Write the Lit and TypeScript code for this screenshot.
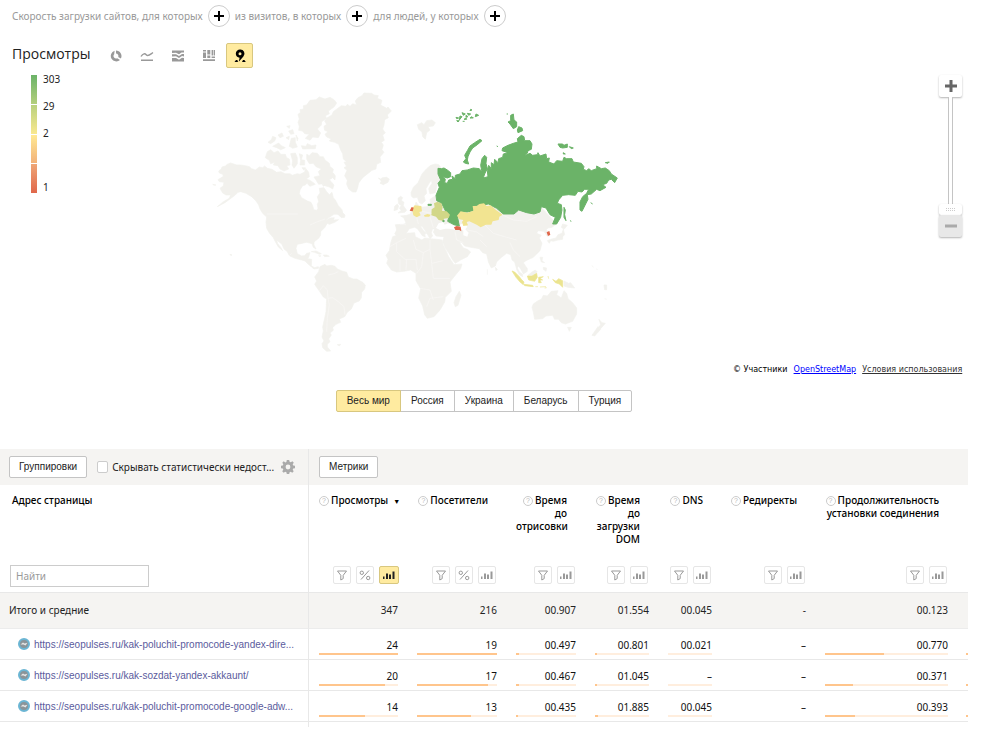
import { LitElement, html, svg, css, nothing } from "lit";
import { customElement } from "lit/decorators.js";
import { classMap } from "lit/directives/class-map.js";
import { styleMap } from "lit/directives/style-map.js";

type Cell = { text: string; bar?: number };
type Column = { title: string[]; percent?: boolean; active?: boolean; sorted?: boolean };

const COLUMNS: Column[] = [
  { title: ["Просмотры"], percent: true, active: true, sorted: true },
  { title: ["Посетители"], percent: true },
  { title: ["Время", "до", "отрисовки"] },
  { title: ["Время", "до", "загрузки", "DOM"] },
  { title: ["DNS"] },
  { title: ["Редиректы"] },
  { title: ["Продолжительность", "установки соединения"] },
];

const TOTALS = ["347", "216", "00.907", "01.554", "00.045", "-", "00.123"];

const ROWS: { url: string; cells: Cell[] }[] = [
  {
    url: "https://seopulses.ru/kak-poluchit-promocode-yandex-dire...",
    cells: [
      { text: "24", bar: 100 }, { text: "19", bar: 100 }, { text: "00.497", bar: 5 }, { text: "00.801", bar: 4 },
      { text: "00.021", bar: 0 }, { text: "–" }, { text: "00.770", bar: 48 },
    ],
  },
  {
    url: "https://seopulses.ru/kak-sozdat-yandex-akkaunt/",
    cells: [
      { text: "20", bar: 83 }, { text: "17", bar: 89 }, { text: "00.467", bar: 5 }, { text: "01.045", bar: 4 },
      { text: "–", bar: 0 }, { text: "–" }, { text: "00.371", bar: 23 },
    ],
  },
  {
    url: "https://seopulses.ru/kak-poluchit-promocode-google-adw...",
    cells: [
      { text: "14", bar: 58 }, { text: "13", bar: 68 }, { text: "00.435", bar: 4 }, { text: "01.885", bar: 5 },
      { text: "00.045", bar: 0 }, { text: "–" }, { text: "00.393", bar: 24 },
    ],
  },
];

const chartIcons = [
  { label: "Круговая диаграмма", art: svg`<path d="M7 1.500A5.500 5.500 0 0 1 11.900 9.500L9.200 8A2.400 2.400 0 0 0 7 4.600z"/><path d="M5.600 1.700L5.200 5.200A2.600 2.600 0 0 0 8.200 9.300L11 11A5.500 5.500 0 1 1 5.600 1.700z"/>` },
  { label: "Линии", art: svg`<path d="M1 7.500C3 4 5 4.400 6.500 6S9.500 6 13 3.500" fill="none" stroke="currentColor" stroke-width="1.400"/><path d="M1 10.500h12v1.500H1z"/>` },
  { label: "Области", art: svg`<path d="M1 1.500h12v2L10.500 3.500L8 5.200L5 3.700L1 4z"/><path d="M1 5.200L5 5.200L8 7L11 5L13 5V7.500L11 7L8 9L5 7.300L1 7.500z"/><path d="M1 9L5 9L8 10.800L11 8.800L13 9V12.500H1z"/>` },
  { label: "Столбцы", art: svg`<path d="M1 1h3v1.500H1zM1 3.500h3V9H1zM5.300 1h3v4.500h-3zM5.300 6.500h3V9h-3zM9.600 1h1.400v5.500H9.600zM11.600 1H13v5.500h-1.400zM9.600 7.500H13V9H9.600zM1 10.300h12V12H1z"/>` },
  { label: "Карта", art: svg`<path d="M7 0.500a4.200 4.200 0 0 0-4.200 4.200c0 2.200 1.600 3.700 3.800 4L5.800 12.800L10.400 7.500A4.200 4.200 0 0 0 7 .5zm0 2.700a1.500 1.500 0 1 1 0 3a1.500 1.500 0 0 1 0-3z" fill-rule="evenodd"/><path d="M1.500 13L3 11L4.400 11L5 13zM9 13L10 11L11.400 11L12.800 13z"/>` },
];

const funnel = svg`<path d="M1.500 2h9L7.200 6.300V9.600L4.800 11V6.300z" fill="none" stroke="currentColor"/>`;
const percent = svg`<path d="M2 10.500L10 1.500" stroke="currentColor"/><circle cx="2.800" cy="3.800" r="1.700" fill="none" stroke="currentColor"/><circle cx="9.200" cy="9" r="1.700" fill="none" stroke="currentColor"/>`;
const bars = svg`<path d="M0 7.500h1.500V10H0zM3 4.500h2V10H3zM6 5.500h2V10H6zM9.500 2.500h2V10h-2z"/>`;

const icon = (art: unknown, size = 12) =>
  html`<svg class="icon" width=${size} height=${size} viewBox="0 0 ${size} ${size}" fill="currentColor" aria-hidden="true">${art}</svg>`;

@customElement("world-map")
export class WorldMap extends LitElement {
  static styles = css`
    :host { display: block; min-width: 0; }
    .map { display: block; width: 100%; height: 285px; }
    .land { fill: #f2f1ed; stroke: #f2f1ed; stroke-width: 2; stroke-linejoin: round; }
    .sea { fill: #fff; }
    .border { fill: none; stroke: #f9f8f6; stroke-width: 2; }
    .high { fill: #6bb368; stroke: #6bb368; stroke-width: 3; stroke-linejoin: round; }
    .medium { fill: #d2d787; }
    .low { fill: #f2e491; }
    .isles { fill: #ebe48f; stroke: #ebe48f; stroke-width: 2; }
    .lowest { fill: #e0674b; }
  `;

  render() {
    return html`<svg class="map" viewBox="210 75 420 285" preserveAspectRatio="xMinYMid meet" role="img" aria-label="Карта мира">
      <g transform="translate(210 85) scale(0.3333)">
        <path class="land" d="M26 258L34 252L36 246L46 243L52 238L62 234L74 238L80 240L92 240L105 242L118 245L125 251L136 255L148 246L158 248L164 243L172 250L186 253L200 262L213 260L225 266L240 266L247 271L262 266L270 268L284 261L287 250L296 262L298 275L290 281L298 288L286 300L278 302L270 315L268 326L275 338L292 348L303 352L308 362L311 374L320 376L324 370L322 358L326 350L322 335L330 324L328 310L342 308L350 320L358 329L366 322L370 338L376 345L385 362L396 374L398 382L390 388L372 388L355 399L345 409L360 399L373 398L370 405L386 404L374 412L358 418L352 415L344 428L332 440L332 450L326 460L312 471L312 480L318 492L310 487L306 476L290 472L272 476L262 478L258 490L262 506L275 513L284 512L290 505L300 503L296 516L293 521L305 523L304 543L314 548L325 545L326 550L312 552L295 538L285 528L275 525L255 520L238 512L232 500L222 492L216 478L200 465L203 476L213 488L218 497L205 486L196 470L190 458L178 444L170 430L168 412L170 396L158 385L150 372L146 360L138 348L125 335L108 325L92 320L84 322L76 330L60 342L45 353L22 365L40 350L58 340L62 330L48 330L38 324L30 310L40 302L42 292L28 290L24 284L40 274L38 268L28 264Z"/>
        <path class="land" d="M166 218L172 200L182 194L192 203L204 198L212 208L226 208L230 218L238 222L240 240L230 242L236 252L222 258L210 252L204 242L190 240L194 232L182 236L178 226Z"/>
        <path class="land" d="M290 208L298 212L306 203L322 205L330 215L340 215L345 225L358 235L360 245L370 252L368 262L376 272L375 285L368 278L358 284L372 300L368 312L358 306L345 302L340 296L326 298L318 285L312 276L330 272L325 260L334 252L318 245L310 235L298 236L290 222Z"/>
        <path class="land" d="M264 88L272 82L270 74L281 72L280 62L290 60L300 46L318 44L328 36L345 42L360 37L372 44L380 54L372 66L355 78L358 86L346 92L350 100L335 110L334 120L322 132L332 144L325 158L308 156L300 166L286 160L298 148L284 146L278 138L266 136L268 124L264 112L268 102Z"/>
        <path class="land" d="M274 182L288 184L292 176L305 182L318 180L316 191L278 192ZM174 172L184 164L188 154L198 158L194 168L182 176ZM188 184L206 174L214 182L226 188L212 194L200 188ZM204 150L216 144L220 154L210 158ZM230 124L240 122L238 130ZM236 138L248 134L252 146L242 148ZM228 158L238 154L236 164ZM244 160L256 158L256 172L262 186L248 190L238 184ZM258 150L264 160L262 168ZM242 206L256 204L262 218L262 236L252 250L246 240L248 228ZM268 206L278 210L274 224L284 226L284 240L270 240L272 226ZM296 284L306 290L316 298L300 304L292 296ZM276 248L286 248L282 256ZM382 386L388 374L395 380L405 390L404 397L394 398ZM336 296L346 300L340 304Z"/>
        <path class="land" d="M345 148L354 140L344 136L342 124L350 118L344 108L352 98L366 90L370 80L386 68L394 62L408 64L412 58L420 64L428 56L440 60L436 48L444 38L456 32L462 24L485 25L492 30L505 32L502 40L516 46L512 60L530 70L534 66L544 78L532 90L535 98L524 104L522 120L518 132L526 144L518 150L523 166L514 172L520 180L516 194L522 202L510 216L512 232L500 238L498 252L486 256L472 267L458 278L446 294L443 308L438 321L428 321L416 312L410 297L412 286L404 272L411 256L402 248L410 244L402 232L410 230L400 222L398 206L392 195L386 178L374 172L358 168L364 162L350 156Z"/>
        <path class="land" d="M505 279L512 282L518 278L530 277L538 282L534 292L520 299L510 295L514 288Z"/>
        <path class="land" d="M330 545L345 538L350 543L364 541L375 544L382 552L396 558L410 562L415 576L430 582L440 582L458 592L466 600L464 612L455 622L454 638L448 648L432 654L424 672L412 682L404 695L388 702L392 712L378 718L368 728L370 736L360 744L364 750L356 762L360 770L352 778L352 786L362 798L350 799L338 788L336 776L342 768L336 756L340 738L338 726L344 700L348 680L350 642L340 636L328 618L314 598L320 588L314 576L326 560Z"/>
        <path class="land" d="M304 500L318 498L334 506L328 508L314 502ZM340 510L350 510L358 514L344 515ZM326 512L333 513L328 514ZM382 779L392 778L388 783ZM8 298L18 300L12 301ZM60 508L66 510L62 511Z"/>
        <path class="land" d="M564 340L572 334L578 338L574 346L582 352L580 362L590 376L584 382L564 384L574 376L568 370L574 362L566 356ZM554 364L562 357L566 364L562 374L552 377Z"/>
        <path class="border" d="M170 387H264M300 420L318 412L345 402M355 570L372 566L385 560M328 618L340 602L352 615L354 640L368 638L385 650L402 665L405 690M354 640L358 660L352 700L350 740M238 512L245 505"/>
      </g>
      <g transform="translate(380 100) scale(0.3333)">
        <path class="land" d="M44 402L50 390L46 374L70 373L78 370L72 354L62 348L80 346L92 342L94 328L104 324L108 306L114 314L116 322L140 320L152 312L150 298L170 285L240 300L380 330L480 318L530 372L516 382L504 384L498 390L508 398L509 407L502 409L492 394L474 392L470 400L484 406L478 414L486 430L480 452L460 472L438 482L430 488L442 506L442 514L430 522L424 510L416 498L412 504L418 516L427 522L428 530L418 524L410 508L404 486L396 480L392 464L380 460L362 474L350 486L346 498L334 504L326 488L320 462L308 458L298 446L272 442L254 438L246 428L238 426L250 444L262 448L272 456L262 470L242 480L226 490L218 480L208 462L196 444L188 425L192 410L168 408L160 396L164 388L158 386L154 398L158 408L150 416L142 402L126 378L122 380L132 394L140 400L134 402L136 410L128 408L112 386L104 382L88 386L80 398L70 410L56 412Z"/>
        <path class="land" d="M93 278L100 262L114 248L126 222L140 206L152 196L166 192L176 194L182 202L178 220L182 236L172 252L166 278L150 282L146 266L156 250L154 240L146 252L138 266L140 280L132 288L136 302L126 312L118 308L112 292L100 294L94 288Z"/>
        <path class="land" d="M112 74L126 68L132 74L140 62L156 60L166 68L160 78L144 80L150 90L140 98L136 118L128 110L126 96L116 88Z"/>
        <path class="sea" d="M168 384L176 370L190 366L194 374L204 370L216 374L230 382L228 390L208 386L196 386L180 390ZM240 374L252 368L262 380L256 388L266 398L262 410L250 406L250 394L242 384Z"/>
        <path class="land" d="M502 422L512 418L528 414L534 404L546 400L550 388L554 404L548 410L548 418L534 420L520 424L512 422L508 430ZM548 372L562 376L552 388L544 382Z"/>
        <path class="high" d="M174 205L184 206L192 204L202 210L212 218L212 230L202 234L190 230L196 238L194 248L202 250L206 240L218 238L216 228L226 236L226 226L240 222L246 212L262 210L280 204L298 206L306 216L302 196L306 176L314 166L320 172L318 190L322 206L314 222L310 234L324 230L322 212L326 196L334 206L334 188L342 194L344 178L354 188L356 176L368 172L370 162L384 158L366 152L368 144L384 136L400 130L414 126L412 116L424 106L432 110L434 122L450 122L456 132L454 148L444 152L442 160L432 168L450 160L458 166L472 164L474 158L480 168L498 162L500 176L508 174L506 186L522 192L530 182L548 184L552 172L560 176L576 176L580 186L604 190L612 200L610 208L620 212L626 206L634 212L650 206L650 198L664 206L676 204L688 212L694 222L712 234L704 248L694 238L686 240L680 250L668 254L678 262L660 272L650 268L634 282L622 284L624 298L614 318L606 334L600 330L600 306L608 290L620 280L626 268L614 268L606 276L594 274L586 286L566 284L548 286L536 300L532 310L544 314L546 330L542 352L530 372L518 372L526 352L510 344L498 324L484 320L480 336L462 342L440 338L416 330L402 342L370 342L350 325L325 312L305 316L282 318L280 332L262 336L240 335L232 348L238 378L222 374L203 364L208 345L198 336L185 310L170 302L168 286L178 262L174 250L182 240L174 222Z"/>
        <path class="high" d="M250 186L258 176L254 166L262 152L270 138L284 128L300 118L306 122L292 134L278 144L270 156L264 170L262 180L266 192L256 190Z"/>
        <path class="high" d="M380 42H384M392 46L400 42L402 60L410 66L410 80L400 86L390 72L384 66L392 62ZM416 80L426 84L428 92L414 98L412 90ZM534 132H548L552 136L562 132L562 142L548 144L540 142ZM568 140L580 144L574 146ZM550 158L556 162L550 162ZM676 188L688 186L684 190ZM552 322L556 330L554 344L558 362L552 352ZM228 52L236 54L230 56ZM240 48L246 50L238 60ZM252 58L258 54L260 58ZM262 40L272 42L266 46ZM270 54L276 50L280 54ZM272 28L276 30L270 32ZM288 42L296 46L286 50ZM144 313H154V316H144ZM632 308L638 312M570 362L574 364M350 138L354 140M186 362L192 360L192 366ZM246 38L256 42L250 46ZM258 46L264 50L258 52ZM230 62L238 62L234 66ZM248 64L254 64"/>
        <path class="low" d="M231 347L242 334L262 338L280 332L278 318L290 318L298 312L312 310L320 318L332 316L348 330L368 344L358 350L356 360L338 364L334 374L318 374L302 382L290 374L268 364L260 366L264 376L250 378L246 366L250 360L238 358Z"/>
        <path class="medium" d="M155 328L164 322L162 310L172 305L184 310L188 322L186 332L200 334L210 344L206 354L192 356L188 362L176 360L168 350L154 346Z"/>
        <path class="low" d="M96 326L104 316L124 318L126 334L118 336L122 346L110 352L100 346ZM132 346L142 342L152 344L148 350L134 350Z"/>
        <path class="lowest" d="M89 332L95 321L101 323L98 334ZM222 382L230 378L242 380L244 394L238 390L226 390ZM500 397L508 393L511 404L504 408Z"/>
        <path class="border" d="M262 390L290 396L310 410M315 375L340 400L380 412L410 420M368 345L400 360L440 364L470 350M225 395L230 420L250 428M300 420L320 440M390 428L400 450L420 470M110 352L115 372M60 374L78 374M150 350L160 384M126 334L154 340"/>
      </g>
      <g transform="translate(380 220) scale(0.3333)">
        <path class="land" d="M38 50L56 44L78 40L104 38L106 50L126 60L134 54L150 56L172 58L186 60L190 76L198 92L206 110L214 122L222 134L246 132L242 146L224 168L210 186L214 214L196 232L194 246L180 270L162 290L142 295L134 284L128 258L116 234L122 206L108 182L108 160L92 150L72 154L50 156L34 150L20 130L24 118L18 106L28 92L32 70Z"/>
        <path class="land" d="M238 214L243 226L234 256L226 260L222 248L228 230ZM346 142L352 148L348 152ZM322 148V164M480 112L488 112L486 122L494 128L484 126ZM490 142L500 144L498 154L490 148ZM444 166L456 156L466 150L472 156L458 166ZM552 183L566 190L572 188L584 204L564 202L552 198ZM460 252L474 242L484 238L490 226L502 228L514 214L534 212L530 224L544 234L552 212L560 220L564 236L578 248L590 264L590 282L578 304L556 312L544 308L536 298L524 298L518 286L498 288L488 296L464 298L460 276L456 262ZM563 322L574 322L568 334ZM657 298L666 308L676 310L662 326L656 322L662 314ZM654 320L662 328L644 348L636 346ZM672 195H680V209H674ZM636 136L640 142M650 146L652 150M674 236L680 238"/>
        <path class="isles" d="M396 153L404 156L418 170L424 178L432 186L430 194L420 186L408 172ZM432 193L458 196L460 200L434 197ZM442 168L456 168L470 160L472 172L464 184L446 180ZM476 172L490 170L480 175L488 180L480 180L484 188L476 188ZM466 200L474 200M480 201L498 200M494 204L500 203M504 168L506 176M518 178L528 184L536 176L548 182V202L538 192L526 188Z"/>
        <path class="border" d="M30 80L50 68L78 55M50 68V95L75 118L108 118M100 60L108 88L130 98L150 88V60M108 118L112 150M150 88L155 130M155 130L190 122M130 98L125 140L110 160M155 130L160 175L210 175M120 205L150 210L160 240M140 260L150 235L190 230M60 118V154M80 118L78 150"/>
      </g>
    </svg>`;
  }
}

@customElement("app-root")
export class AppRoot extends LitElement {
  static styles = css`
    :host { display: block; padding-right: 20px; box-sizing: border-box; color: #222; background: #fff; font: 11px/13px "Noto Sans", sans-serif; }
    * { box-sizing: border-box; }
    button { margin: 0; padding: 0; border: 0; background: none; font: inherit; color: inherit; }
    .icon { display: block; }
    .filters { display: flex; align-items: center; gap: 5px; height: 32px; padding-left: 12px; color: #999; font: 10px/22px "Noto Sans", sans-serif; white-space: nowrap; }
    .add { display: grid; place-items: center; flex: none; width: 22px; height: 22px; border: 1px solid #ccc; border-radius: 50%; color: #000; }
    .chart-head { display: flex; align-items: center; height: 25px; margin-top: 11px; padding-left: 12px; }
    .title { width: 90px; margin: 0; padding-bottom: 3px; font: 14px/20px "Open Sans", sans-serif; white-space: nowrap; }
    .kinds { display: flex; gap: 4px; }
    .kind { display: grid; place-items: center; width: 27px; height: 25px; color: #999; border: 1px solid transparent; border-radius: 2px; }
    .kind.on { color: #000; background: #ffeba0; border-color: #d8c77f; }
    .stage { display: grid; grid-template-columns: 179px 1fr 29px; margin-top: 7px; padding-left: 31px; }
    .legend { display: flex; gap: 6px; height: 118px; }
    .scale { display: flex; flex-direction: column; gap: 1px; width: 6px; background: #fff; }
    .part { flex: 1; }
    .part:nth-child(1) { background: linear-gradient(#6bb368, #b3cf7c); }
    .part:nth-child(2) { background: linear-gradient(#b9d17e, #f9e88f); }
    .part:nth-child(3) { background: linear-gradient(#ffe993, #f2b27a); }
    .part:nth-child(4) { background: linear-gradient(#efa676, #e0674b); }
    .marks { margin: 0; padding: 0; list-style: none; font-size: 10px; line-height: 9px; }
    .mark { height: 27px; }
    .zoom { display: flex; flex-direction: column; align-items: center; width: 23px; height: 162px; }
    .step { display: grid; place-items: center; width: 23px; height: 22px; border-radius: 2px; background: #fff; color: #666; box-shadow: 0 1px 2px #0000004d; }
    .step.off { background: #e8e8e8; color: #aaa; }
    .range { appearance: none; writing-mode: vertical-lr; direction: rtl; width: 23px; height: 118px; margin: 0; background: linear-gradient(90deg, transparent 9px, #c4c4c4 9px 10px, #fff 10px 13px, #c4c4c4 13px 14px, transparent 14px); }
    .range::-webkit-slider-thumb { appearance: none; width: 23px; height: 11px; border-radius: 2px; background: linear-gradient(#fff, #fff) center / 9px 1px no-repeat, repeating-linear-gradient(90deg, #ccc 0 1px, #fff 1px 2px) center / 9px 3px no-repeat, #fff; box-shadow: 0 1px 2px #0000004d; }
    .credits { display: flex; gap: 6px; width: 235px; margin: 4px 0 0 auto; white-space: nowrap; font: 8px/12px "DejaVu Sans", sans-serif; color: #000; }
    .osm { color: #00f; }
    .terms { color: #333; }
    .regions { display: flex; justify-content: center; margin-top: 14px; }
    .region { height: 22px; padding: 0 10px; border: 1px solid #c4c4c4; font: 10px/20px "Liberation Sans", sans-serif; background: #fff; }
    .region:first-child { border-radius: 2px 0 0 2px; }
    .region:last-child { border-radius: 0 2px 2px 0; }
    .region + .region { margin-left: -1px; }
    .region.on { background: #ffeba0; border-color: #d8c77f; z-index: 1; }
    .data { width: 100%; margin-top: 37px; border-collapse: separate; border-spacing: 0; table-layout: fixed; }
    .w1 { width: 98px; } .w2 { width: 99px; } .w3 { width: 79px; } .w4 { width: 73px; } .w5 { width: 63px; } .w6 { width: 94px; } .w7 { width: 142px; } .w8 { width: 11px; }
    th, td { padding: 0 9px 0 10px; text-align: right; font-weight: 400; }
    .first { padding: 0 9px; text-align: left; border-right: 1px solid #e8e8e8; }
    .bar-row th, .bar-row td { height: 36px; background: #f5f4f2; text-align: left; }
    .tools { display: flex; align-items: center; white-space: nowrap; }
    .push { height: 22px; padding: 0 9px; border: 1px solid #c4c4c4; border-radius: 2px; background: #fff; font: 10px/20px "Liberation Sans", sans-serif; }
    .hide { display: flex; align-items: center; gap: 4px; margin: 0 7px 0 10px; font-size: 10px; }
    .tick { appearance: none; width: 11px; height: 12px; margin: 0; border: 1px solid #ccc; border-radius: 2px; background: #fff; }
    .gear { color: #aaa; }
    .head { height: 108px; vertical-align: top; padding-top: 9px; font-weight: 500; color: #000; font-size: 10px; white-space: nowrap; border-bottom: 1px solid #e8e8e8; }
    .cell { display: flex; flex-direction: column; justify-content: space-between; height: 90px; }
    .first .cell { height: 93px; }
    .name { display: block; padding-right: 9px; }
    .name.sorted { padding-right: 0; }
    .first .name { padding-left: 3px; }
    .line { display: block; }
    .help { display: inline-grid; place-items: center; width: 10px; height: 10px; margin-right: 2px; border: 1px solid #ccc; border-radius: 50%; color: #bbb; font: 7px/8px "Liberation Sans", sans-serif; vertical-align: top; margin-top: 2px; }
    .arrow { margin-left: 5px; font-size: 7px; }
    .switches { display: flex; justify-content: flex-end; gap: 5px; margin-right: 1px; }
    .switches.wide { margin-right: -1px; }
    .switch { display: grid; place-items: center; width: 18px; height: 18px; border: 1px solid #e6e6e6; border-radius: 2px; color: #999; }
    .switch.on { width: 20px; background: #ffeba0; border-color: #d8c77f; color: #222; }
    .search { width: 139px; height: 22px; margin: 0 0 0 1px; padding: 0 5px; border: 1px solid #ccc; font: 10px/20px "Noto Sans", sans-serif; color: #222; }
    .search::placeholder { color: #999; opacity: 1; }
    .total { height: 36px; background: #f5f4f2; border-bottom: 1px solid #ececec; font-size: 10px; }
    .row-cell { height: 31px; border-bottom: 1px solid #e8e8e8; font-size: 10px; vertical-align: bottom; }
    .value { display: block; line-height: 13px; color: #111; }
    .track { display: block; height: 2px; margin: 1px 0 4px; }
    .track.shown { background: #ffeede; }
    .fill { display: block; height: 2px; background: #ffc58c; }
    .page { display: flex; align-items: center; gap: 4px; padding-left: 9px; height: 30px; }
    .site { flex: none; }
    .link { color: #5b5b9d; text-decoration: none; font: 10px/13px "Liberation Sans", sans-serif; white-space: nowrap; }
    .edge { padding: 0 0 0 9px; }
    .tail { height: 5px; }
  `;

  private headCell(c: Column) {
    return html`<th class="head" scope="col"><div class="cell">
      <span class=${classMap({ name: true, sorted: !!c.sorted })}>${c.title.map((t, i) => html`<span class="line">${i === 0 ? html`<span class="help">?</span>` : nothing}${t}${c.sorted ? html`<span class="arrow">▼</span>` : nothing}</span>`)}</span>
      <span class=${classMap({ switches: true, wide: !!c.active })}>
        <button class="switch" aria-label="Фильтр">${icon(funnel)}</button>
        ${c.percent ? html`<button class="switch" aria-label="Проценты">${icon(percent)}</button>` : nothing}
        <button class=${classMap({ switch: true, on: !!c.active })} aria-label="График">${icon(bars)}</button>
      </span></div></th>`;
  }

  render() {
    const plus = svg`<path d="M5 1h2v4h4v2H7v4H5V7H1V5h4z"/>`;
    return html`
      <div class="filters">
        ${["Скорость загрузки сайтов, для которых", "из визитов, в которых", "для людей, у которых"].map(
          (t) => html`<span>${t}</span><button class="add" aria-label="Добавить условие">${icon(plus)}</button>`
        )}
      </div>
      <div class="chart-head">
        <h1 class="title">Просмотры</h1>
        <div class="kinds">
          ${chartIcons.map((k, i) => html`<button class=${classMap({ kind: true, on: i === 4 })} aria-label=${k.label}>${icon(k.art, 14)}</button>`)}
        </div>
      </div>
      <div class="stage">
        <div class="legend">
          <div class="scale">${[0, 1, 2, 3].map(() => html`<span class="part"></span>`)}</div>
          <ul class="marks">${["303", "29", "2", "", "1"].map((m) => html`<li class="mark">${m}</li>`)}</ul>
        </div>
        <world-map></world-map>
        <div class="zoom">
          <button class="step" aria-label="Приблизить">${icon(svg`<path d="M4.500 0h3v4.500H12v3H7.500V12h-3V7.500H0v-3h4.500z"/>`)}</button>
          <input class="range" type="range" min="0" max="10" value="0" aria-label="Масштаб" />
          <button class="step off" aria-label="Отдалить">${icon(svg`<path d="M0 4.500h12v3H0z"/>`)}</button>
        </div>
      </div>
      <div class="credits"><span>© Участники</span><a class="osm" href="#">OpenStreetMap</a><a class="terms" href="#">Условия использования</a></div>
      <div class="regions">
        ${["Весь мир", "Россия", "Украина", "Беларусь", "Турция"].map(
          (r, i) => html`<button class=${classMap({ region: true, on: i === 0 })}>${r}</button>`
        )}
      </div>
      <table class="data">
        <colgroup><col />${[1, 2, 3, 4, 5, 6, 7, 8].map((n) => html`<col class="w${n}" />`)}</colgroup>
        <thead>
          <tr class="bar-row">
            <td class="first"><div class="tools">
              <button class="push">Группировки</button>
              <label class="hide"><input class="tick" type="checkbox" />Скрывать статистически недост...</label>
              <button class="gear" aria-label="Настройки">${icon(svg`<path fill-rule="evenodd" d="M5.800 0h2.400l.4 1.800 1.200.5L11.400 1.300 12.800 2.700 11.700 4.300 12.200 5.400 14 5.800v2.400l-1.800.4-.5 1.200 1 1.500-1.400 1.500-1.600-1.100-1.100.5L8.200 14H5.800l-.4-1.800-1.200-.5-1.500 1L1.200 11.300l1.100-1.600-.5-1.100L0 8.200V5.800l1.800-.4.5-1.200-1-1.500L2.700 1.300l1.600 1.100 1.100-.5zM7 4.600a2.400 2.400 0 1 0 0 4.800a2.400 2.400 0 0 0 0-4.800z"/>`, 14)}</button>
            </div></td>
            <td colspan="8"><button class="push">Метрики</button></td>
          </tr>
          <tr>
            <th class="head first" scope="col"><div class="cell">
              <span class="name">Адрес страницы</span>
              <input class="search" type="text" placeholder="Найти" aria-label="Найти" />
            </div></th>
            ${COLUMNS.map((c) => this.headCell(c))}
            <td class="head edge"></td>
          </tr>
        </thead>
        <tbody>
          <tr>
            <th class="total first" scope="row">Итого и средние</th>
            ${TOTALS.map((t) => html`<td class="total">${t}</td>`)}
            <td class="total edge"></td>
          </tr>
          ${ROWS.map((r) => html`<tr>
            <th class="row-cell first" scope="row"><div class="page">
              <svg class="site" width="12" height="12" viewBox="0 0 12 12" aria-hidden="true"><circle cx="6" cy="6" r="5" fill="#8b9498" stroke="#6bb5d3" stroke-width="2"/><path d="M2.500 6.500L5 4.500L6.500 5.500L9.500 4.800L7.500 7.500L5.500 6.500z" fill="#e6e6e6"/></svg>
              <a class="link" href="#">${r.url}</a></div></th>
            ${r.cells.map((c) => html`<td class="row-cell"><span class="value">${c.text}</span>
              <span class=${classMap({ track: true, shown: c.bar !== undefined })}><span class="fill" style=${styleMap({ width: `${c.bar ?? 0}%` })}></span></span></td>`)}
            <td class="row-cell edge"><span class="track"><span class="fill"></span></span></td>
          </tr>`)}
          <tr><td class="first tail"></td><td colspan="8"></td></tr>
        </tbody>
      </table>
    `;
  }
}
